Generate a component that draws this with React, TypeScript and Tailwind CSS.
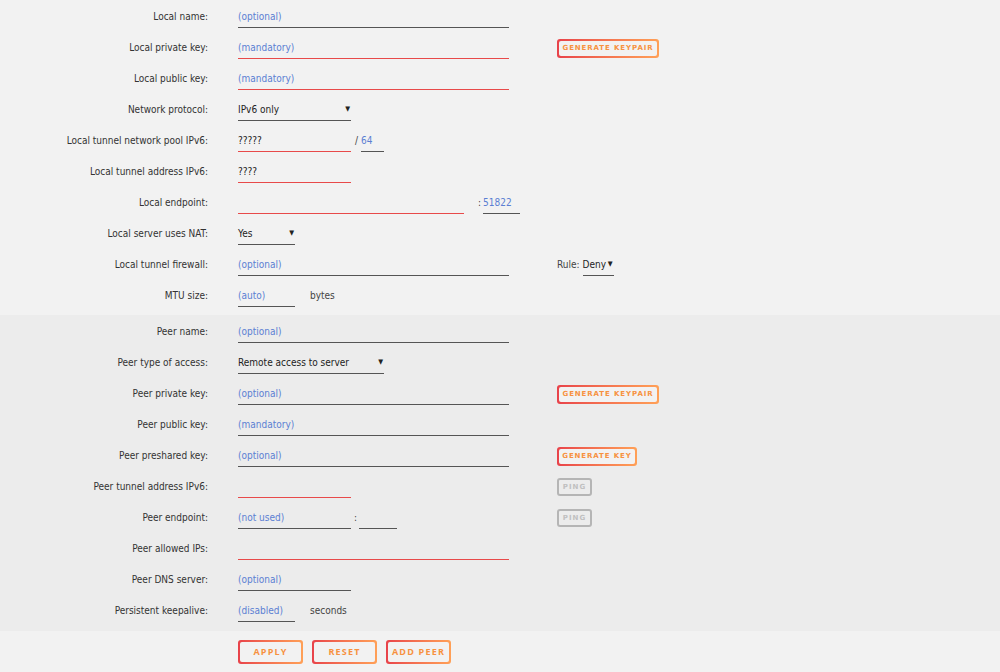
import React from 'react';

const font = { fontFamily: '"DejaVu Sans Condensed", "DejaVu Sans", sans-serif' };
const btnFont = { fontFamily: '"DejaVu Sans", sans-serif' };
const bigBtnFont = { fontFamily: '"Open Sans", "DejaVu Sans", sans-serif' };

function Field({ placeholder, value, width, required, blue }: { placeholder?: string; value?: string; width: string; required?: boolean; blue?: boolean }) {
  const border = required ? 'border-b border-[#e84a4a]' : 'border-b border-[#555]';
  const color = value && !blue ? 'text-[#222]' : 'text-[#5b7fd3]';
  return (
    <div className={`${width} ${border} ${color} h-[22px] mt-[6px] flex items-center text-[10px] whitespace-nowrap`}>
      {value ?? placeholder ?? ''}
    </div>
  );
}

function Select({ value, width }: { value: string; width: string }) {
  return (
    <div className={`${width} h-[22px] mt-[6px] flex items-center justify-between border-b border-[#555] text-[10px] text-[#222]`}>
      <span>{value}</span>
      <span className="text-[7px] pr-[1px]">▼</span>
    </div>
  );
}

function GradButton({ label, small, width, height }: { label: string; small?: boolean; width: string; height: string }) {
  return (
    <div className={`${width} ${height} rounded-[3px] p-[2px] bg-gradient-to-r from-[#e8424a] to-[#ffa057]`}>
      <div
        className={`w-full h-full rounded-[2px] bg-[#f2f2f2] flex items-center justify-center font-bold uppercase whitespace-nowrap text-[#f7913f] ${
          small ? 'text-[7px] tracking-[0.9px]' : 'text-[9px] tracking-[1.2px]'
        }`}
        style={small ? btnFont : bigBtnFont}
      >
        {label}
      </div>
    </div>
  );
}

function PingButton() {
  return (
    <div
      className="w-[35px] h-[18px] mt-[8px] rounded-[3px] border-2 border-[#b5b5b5] flex items-center justify-center text-[7px] font-bold tracking-[1px] text-[#c0c0c0]"
      style={btnFont}
    >
      PING
    </div>
  );
}

function Row({ label, children, right }: { label: string; children: React.ReactNode; right?: React.ReactNode }) {
  return (
    <div className="flex h-[31px]">
      <div className="w-[208px] text-right pt-[10px] text-[10px] leading-[14px] text-[#333]">{label}</div>
      <div className="ml-[30px] w-[319px] flex items-start">{children}</div>
      <div className="flex items-start">{right}</div>
    </div>
  );
}

function Sep({ text, className }: { text: string; className: string }) {
  return <span className={`pt-[10px] text-[10px] leading-[14px] text-[#444] ${className}`}>{text}</span>;
}

export default function App() {
  return (
    <div className="w-[1000px] h-[672px] bg-[#f2f2f2] overflow-hidden" style={font}>
      <div className="pb-[5px]">
        <Row label="Local name:">
          <Field placeholder="(optional)" width="w-[271px]" />
        </Row>
        <Row
          label="Local private key:"
          right={
            <div className="mt-[8px]">
              <GradButton label="Generate keypair" small width="w-[102px]" height="h-[19px]" />
            </div>
          }
        >
          <Field placeholder="(mandatory)" width="w-[271px]" required />
        </Row>
        <Row label="Local public key:">
          <Field placeholder="(mandatory)" width="w-[271px]" required />
        </Row>
        <Row label="Network protocol:">
          <Select value="IPv6 only" width="w-[113px]" />
        </Row>
        <Row label="Local tunnel network pool IPv6:">
          <Field value="?????" width="w-[113px]" required />
          <Sep text="/" className="ml-[4px] mr-[3px]" />
          <Field value="64" width="w-[23px]" blue />
        </Row>
        <Row label="Local tunnel address IPv6:">
          <Field value="????" width="w-[113px]" required />
        </Row>
        <Row label="Local endpoint:">
          <Field width="w-[226px]" required />
          <Sep text=":" className="ml-[14px] mr-[2px]" />
          <Field value="51822" width="w-[37px]" blue />
        </Row>
        <Row label="Local server uses NAT:">
          <Select value="Yes" width="w-[57px]" />
        </Row>
        <Row
          label="Local tunnel firewall:"
          right={
            <div className="flex items-start">
              <Sep text="Rule:" className="mr-[3px]" />
              <Select value="Deny" width="w-[31px]" />
            </div>
          }
        >
          <Field placeholder="(optional)" width="w-[271px]" />
        </Row>
        <Row label="MTU size:">
          <Field placeholder="(auto)" width="w-[57px]" />
          <Sep text="bytes" className="ml-[15px]" />
        </Row>
      </div>

      <div className="bg-[#ececec] pb-[6px]">
        <Row label="Peer name:">
          <Field placeholder="(optional)" width="w-[271px]" />
        </Row>
        <Row label="Peer type of access:">
          <Select value="Remote access to server" width="w-[146px]" />
        </Row>
        <Row
          label="Peer private key:"
          right={
            <div className="mt-[8px]">
              <GradButton label="Generate keypair" small width="w-[102px]" height="h-[19px]" />
            </div>
          }
        >
          <Field placeholder="(optional)" width="w-[271px]" />
        </Row>
        <Row label="Peer public key:">
          <Field placeholder="(mandatory)" width="w-[271px]" />
        </Row>
        <Row
          label="Peer preshared key:"
          right={
            <div className="mt-[8px]">
              <GradButton label="Generate key" small width="w-[80px]" height="h-[19px]" />
            </div>
          }
        >
          <Field placeholder="(optional)" width="w-[271px]" />
        </Row>
        <Row label="Peer tunnel address IPv6:" right={<PingButton />}>
          <Field width="w-[113px]" required />
        </Row>
        <Row label="Peer endpoint:" right={<PingButton />}>
          <Field placeholder="(not used)" width="w-[113px]" />
          <Sep text=":" className="ml-[3px] mr-[2px]" />
          <Field width="w-[38px]" />
        </Row>
        <Row label="Peer allowed IPs:">
          <Field width="w-[271px]" required />
        </Row>
        <Row label="Peer DNS server:">
          <Field placeholder="(optional)" width="w-[113px]" />
        </Row>
        <Row label="Persistent keepalive:">
          <Field placeholder="(disabled)" width="w-[57px]" />
          <Sep text="seconds" className="ml-[15px]" />
        </Row>
      </div>

      <div className="flex gap-[9px] ml-[238px] mt-[9px]">
        <GradButton label="Apply" width="w-[65px]" height="h-[24px]" />
        <GradButton label="Reset" width="w-[65px]" height="h-[24px]" />
        <GradButton label="Add peer" width="w-[65px]" height="h-[24px]" />
      </div>
    </div>
  );
}
